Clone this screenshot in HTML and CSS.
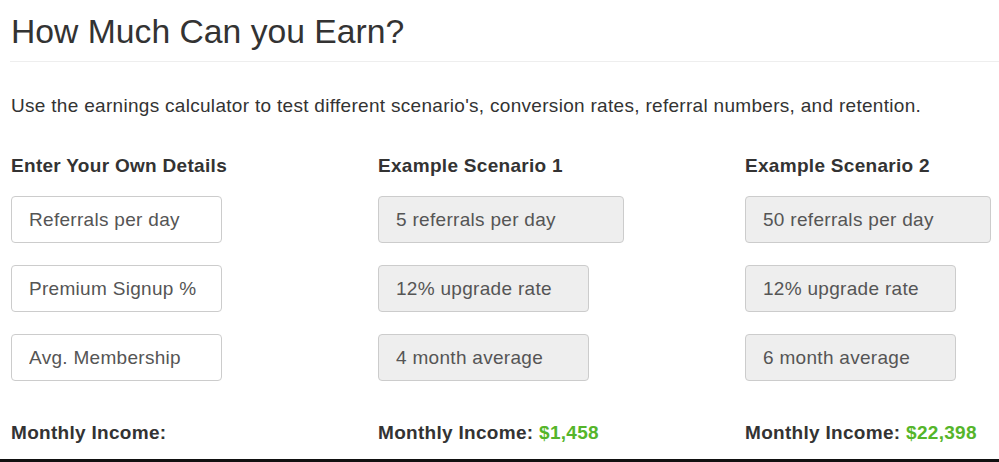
FILE: index.html
```html
<!DOCTYPE html>
<html>
<head>
<meta charset="utf-8">
<link rel="stylesheet" href="styles.css">
</head>
<body>
<div class="page">
  <h1 class="title">How Much Can you Earn?</h1>
  <hr class="rule">
  <p class="lead">Use the earnings calculator to test different scenario's, conversion rates, referral numbers, and retention.</p>
  <div class="cols">
    <div class="col">
      <h3 class="col-title">Enter Your Own Details</h3>
      <div class="fields">
        <input class="field" type="text" placeholder="Referrals per day">
        <input class="field" type="text" placeholder="Premium Signup %">
        <input class="field" type="text" placeholder="Avg. Membership">
      </div>
      <div class="income">Monthly Income: <span class="amount"></span></div>
    </div>
    <div class="col">
      <h3 class="col-title">Example Scenario 1</h3>
      <div class="fields">
        <input class="field field-ro field-wide" type="text" value="5 referrals per day" readonly>
        <input class="field field-ro" type="text" value="12% upgrade rate" readonly>
        <input class="field field-ro" type="text" value="4 month average" readonly>
      </div>
      <div class="income">Monthly Income: <span class="amount">$1,458</span></div>
    </div>
    <div class="col">
      <h3 class="col-title">Example Scenario 2</h3>
      <div class="fields">
        <input class="field field-ro field-wide" type="text" value="50 referrals per day" readonly>
        <input class="field field-ro" type="text" value="12% upgrade rate" readonly>
        <input class="field field-ro" type="text" value="6 month average" readonly>
      </div>
      <div class="income">Monthly Income: <span class="amount">$22,398</span></div>
    </div>
  </div>
</div>
<div class="bottom-bar"></div>
</body>
</html>
```
FILE: styles.css
```css
html, body {
  margin: 0;
  padding: 0;
  background: #fff;
}
body {
  font-family: "Liberation Sans", Arial, sans-serif;
  color: #333;
  height: 462px;
  overflow: hidden;
  position: relative;
}
.page {
  padding: 0 0 0 11px;
}
.title {
  margin: 13px 0 0 0;
  font-size: 33.7px;
  line-height: 37px;
  font-weight: normal;
  color: #333;
}
.rule {
  margin: 11px 0 0 -1px;
  border: 0;
  border-top: 1px solid #eee;
  height: 0;
}
.lead {
  margin: 31px 0 0 0;
  font-size: 19px;
  letter-spacing: 0.3px;
  line-height: 26px;
}
.cols {
  display: grid;
  grid-template-columns: 367px 367px 254px;
  margin-top: 34px;
}
.col-title {
  margin: 0;
  font-size: 19px;
  letter-spacing: 0.3px;
  line-height: 26px;
  font-weight: bold;
}
.fields {
  display: flex;
  flex-direction: column;
  align-items: flex-start;
  gap: 22px;
  margin-top: 17px;
}
.field {
  box-sizing: border-box;
  width: 211px;
  height: 47px;
  margin: 0;
  padding: 0 17px;
  font-family: "Liberation Sans", Arial, sans-serif;
  font-size: 19px;
  letter-spacing: 0.3px;
  color: #555;
  background: #fff;
  border: 1px solid #ccc;
  border-radius: 4px;
  outline: none;
}
.field::placeholder {
  color: #555;
  opacity: 1;
}
.field-ro {
  background: #eee;
}
.field-wide {
  width: 246px;
}
.income {
  margin-top: 39px;
  font-size: 19px;
  letter-spacing: 0.3px;
  line-height: 26px;
  font-weight: bold;
}
.amount {
  color: #55b52a;
}
.bottom-bar {
  position: absolute;
  left: 0;
  right: 0;
  bottom: 0;
  height: 3px;
  background: #111;
}
```
